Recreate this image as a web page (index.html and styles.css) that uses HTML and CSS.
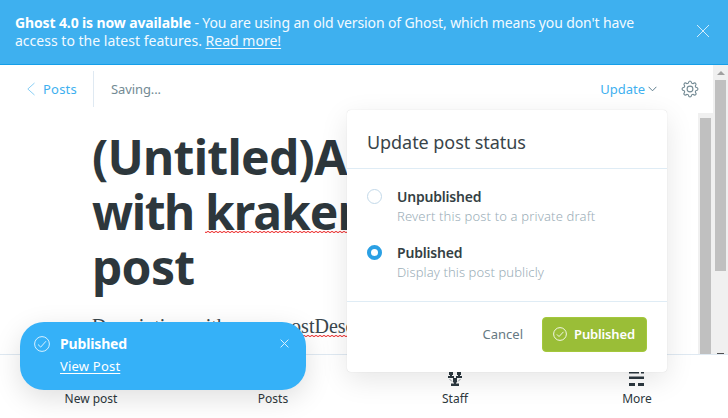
FILE: index.html
```html
<!DOCTYPE html>
<html lang="en">
<head>
<meta charset="utf-8">
<title>Post editor</title>
<link rel="stylesheet" href="styles.css">
</head>
<body>
<div class="app">
  <header class="banner">
    <p class="banner-text"><span class="line"><b>Ghost 4.0 is now available</b> - You are using an old version of Ghost, which means you don't have</span><span class="line second">access to the latest features. <a class="link">Read more!</a></span></p>
    <svg class="banner-close" width="14" height="14" viewBox="0 0 14 14"><path d="M1 1l12 12M13 1L1 13"/></svg>
  </header>
  <div class="workspace">
    <main class="editor">
      <div class="toolbar">
        <a class="back"><svg width="9" height="14" viewBox="0 0 9 14"><path d="M7.500 1L.8 7l6.700 6"/></svg><span>Posts</span></a>
        <span class="saving">Saving...</span>
        <span class="update">Update</span>
        <svg class="chevron" width="9" height="6" viewBox="0 0 9 6"><path d="M.6.8l3.900 4 3.900-4"/></svg>
        <svg class="gear" width="18" height="18" viewBox="0 0 18 18"><path d="M7.300 3.200Q7.700 1 9 1t1.700 2.200l1.200.5q1.900-1.300 2.800-.4t-.4 2.800l.5 1.200Q17 7.700 17 9t-2.200 1.700l-.5 1.200q1.300 1.900.4 2.800t-2.800-.4l-1.200.5Q10.300 17 9 17t-1.700-2.200l-1.200-.5q-1.900 1.300-2.800.4t.4-2.800l-.5-1.200Q1 10.300 1 9t2.200-1.700l.5-1.200q-1.300-1.900-.4-2.800t2.800.4z"/><circle cx="9" cy="9" r="2.900"/></svg>
      </div>
      <div class="page">
        <article class="post">
          <h1 class="post-title"><span>(Untitled)A</span><span class="middle">with <u class="spell">kraken</u></span><span>post</span></h1>
          <p class="post-body">Description with some <u class="spell">postDesc</u></p>
        </article>
        <div class="inner-scroll"><div class="inner-thumb"></div></div>
      </div>
    </main>
    <div class="outer-scroll"><div class="arrow"></div><div class="outer-thumb"></div><div class="outer-end"></div></div>
  </div>
  <nav class="tabs">
    <a class="tab"><span>New post</span></a>
    <a class="tab"><span>Posts</span></a>
    <a class="tab"><svg width="16" height="18" viewBox="0 0 16 18"><g fill="#2c3840"><path d="M2 2h4v4H5v1h2v2H1V7h2V6H2zM10 2h4v4h-1v1h2v2H9V7h2V6h-1zM6 9h4v4.500H9v1h3V17H4v-2.500h3v-1H6z"/></g><path d="M2.500 10l2.500 2.500M13.500 10L11 12.500" stroke="#8b969c"/></svg><span>Staff</span></a>
    <a class="tab"><svg width="16" height="18" viewBox="0 0 16 18"><path fill="#2c3840" d="M0 2h10v2.500H0zM12 2h3v2.500h-3zM0 7.500h15V10H0zM0 14h6v3H0zM9 14h6v3H9z"/></svg><span>More</span></a>
  </nav>
  <section class="dialog">
    <h2 class="dialog-title"><span>Update post status</span></h2>
    <div class="options">
      <div class="option"><i class="radio"></i><div><strong class="name unpub">Unpublished</strong><span class="hint revert">Revert this post to a private draft</span></div></div>
      <div class="option"><i class="radio on"></i><div><strong class="name">Published</strong><span class="hint display">Display this post publicly</span></div></div>
    </div>
    <footer class="actions">
      <span class="cancel">Cancel</span>
      <button class="publish"><svg width="14" height="14" viewBox="0 0 16 16"><circle cx="8" cy="8" r="7.300"/><path d="M4.500 8.500l2.400 2.400L12 5.500"/></svg><span>Published</span></button>
    </footer>
  </section>
  <aside class="toast">
    <svg class="toast-check" width="16" height="16" viewBox="0 0 16 16"><circle cx="8" cy="8" r="7.400"/><path d="M4 8.500l2.700 2.600L12 5.200"/></svg>
    <div class="toast-copy"><strong>Published</strong><a class="link">View Post</a></div>
    <svg class="toast-close" width="9" height="9" viewBox="0 0 9 9"><path d="M.6.6l7.800 7.800M8.400.6L.6 8.400"/></svg>
  </aside>
</div>
</body>
</html>
```
FILE: styles.css
```css
* { box-sizing: border-box; }
body { margin: 0; font-family: "Noto Sans", "Open Sans", sans-serif; font-size: 13px; color: #2c373d; background: #fff; overflow: hidden; }
svg { display: block; flex: none; fill: none; }
h1, h2, p { margin: 0; font-weight: normal; }
.app { position: relative; width: 728px; height: 418px; display: flex; flex-direction: column; overflow: hidden; }
.link { text-decoration: underline; text-underline-offset: 2px; }

.banner { height: 65px; flex: none; display: flex; justify-content: space-between; padding: 14px 18px 0 15px; background: #3eb0ef; border-bottom: 1px solid #159ee8; color: #fff; }
.banner-text { font-size: 14px; line-height: 18px; white-space: nowrap; color: #f2faff; }
.banner-text .line { display: block; letter-spacing: -.12px; }
.banner-text .second { letter-spacing: .01px; }
.banner-text b { color: #fff; letter-spacing: -.13px; }
.banner-close { margin-top: 10px; stroke: #e3f4fd; stroke-width: .9; }

.workspace { flex: none; height: 289px; display: flex; }
.editor { width: 713px; display: flex; flex-direction: column; }
.toolbar { height: 48px; flex: none; display: flex; align-items: center; padding: 0 14px 0 27px; color: #738a94; line-height: 18px; }
.back { display: flex; align-items: center; gap: 7px; width: 67px; height: 36px; border-right: 1px solid #dfe9f2; color: #3eb0ef; letter-spacing: .2px; }
.back svg { stroke: #8acff5; }
.saving { margin-left: 17px; letter-spacing: -.1px; }
.update { margin-left: auto; color: #3eb0ef; }
.chevron { margin-left: 3px; stroke: #607f8f; }
.gear { margin-left: 24px; stroke: #738a94; stroke-width: 1.100; }
.page { flex: 1; display: flex; justify-content: space-between; min-height: 0; overflow: hidden; }
.post { padding: 16px 0 0 92px; white-space: nowrap; width: 600px; overflow: hidden; }
.post-title { font-weight: 700; font-size: 48px; line-height: 55px; color: #2d373c; letter-spacing: -.72px; }
.post-title span { display: block; }
.post-title .middle { letter-spacing: -1.400px; }
.spell { text-decoration: none; background: repeating-linear-gradient(90deg, #ee4b4b 0 2px, #fbd0d0 2px 4px) 0 100% / 100% 1px no-repeat, repeating-linear-gradient(90deg, #fbd0d0 0 2px, #ee4b4b 2px 4px) 0 calc(100% - 1px) / 100% 1px no-repeat; }
.post-title .spell { display: inline-block; height: 49px; line-height: 55px; vertical-align: top; letter-spacing: -1px; }
.post-body { margin-top: 17px; font: 20px/30px "Liberation Serif", serif; word-spacing: 1px; color: #3a474d; }
.inner-scroll { width: 15px; background: #f0f0f0; padding: 5px 2px 0; }
.inner-thumb { width: 11px; height: 240px; background: #c0c0c0; }
.outer-scroll { width: 15px; background: #f0f0f0; display: flex; flex-direction: column; align-items: center; }
.arrow { margin-top: 6px; border: 4px solid transparent; border-top-width: 0; border-bottom-color: #a0a0a0; }
.outer-thumb { margin-top: 5px; width: 11px; height: 191px; background: #c0c0c0; }
.outer-end { margin-top: auto; width: 7px; height: 1px; background: #505050; }

.tabs { flex: none; height: 64px; display: grid; grid-template-columns: repeat(4, 1fr); border-top: 1px solid #dfe9f2; }
.tab { display: flex; flex-direction: column; align-items: center; justify-content: flex-end; padding-bottom: 11px; gap: 3px; font-size: 12px; line-height: 17px; }

.dialog { position: absolute; left: 347px; top: 110px; width: 320px; height: 262px; background: #fff; border-radius: 4px; box-shadow: 0 0 1px rgba(0,0,0,.18), 0 8px 28px rgba(0,0,0,.1); }
.dialog-title { height: 59px; padding: 20px 20px 0; border-bottom: 1px solid #dfecf5; font-size: 18px; line-height: 25px; color: #394449; letter-spacing: -.06px; }
.options { height: 133px; padding: 18px 20px 0; border-bottom: 1px solid #dfecf5; display: flex; flex-direction: column; gap: 16px; }
.option { display: flex; gap: 15px; height: 40px; white-space: nowrap; }
.radio { width: 15px; height: 15px; margin-top: 2px; border: 1px solid #c3d9e9; border-radius: 50%; }
.radio.on { border: 4px solid #2ba0e4; }
.name { display: block; font-size: 14px; line-height: 20px; font-weight: 600; color: #343f44; letter-spacing: -.2px; }
.hint { display: block; font-size: 13px; line-height: 18px; color: #9baeb8; font-weight: 300; letter-spacing: .16px; }
.display { letter-spacing: .1px; }
.actions { display: flex; align-items: center; justify-content: flex-end; padding: 15px 20px 0; gap: 19px; }
.cancel { color: #667983; margin-top: -1px; }
.publish { width: 105px; height: 35px; display: flex; align-items: center; justify-content: center; gap: 7px; padding: 0 1px 1px 0; border: 1px solid #a4c83c; border-radius: 4px; background: #9abe37; color: #fff; font: 600 13px/18px "Noto Sans", sans-serif; letter-spacing: -.15px; }
.publish svg { stroke: #fff; }

.toast { position: absolute; left: 20px; top: 322px; width: 286px; height: 68px; display: flex; padding: 12px 17px 0 14px; border-radius: 24px; background: #35b1f8; color: #fff; box-shadow: 0 8px 28px rgba(0,0,0,.13); }
.toast svg { stroke: #d9f1ff; }
.toast-check { margin-top: 2px; }
.toast-copy { flex: 1; margin-left: 10px; display: flex; flex-direction: column; gap: 2px; align-items: flex-start; line-height: 20px; }
.toast-copy strong { font-size: 14px; letter-spacing: -.15px; }
.toast-copy .link { letter-spacing: .2px; }
.toast-close { margin-top: 5px; }
```
